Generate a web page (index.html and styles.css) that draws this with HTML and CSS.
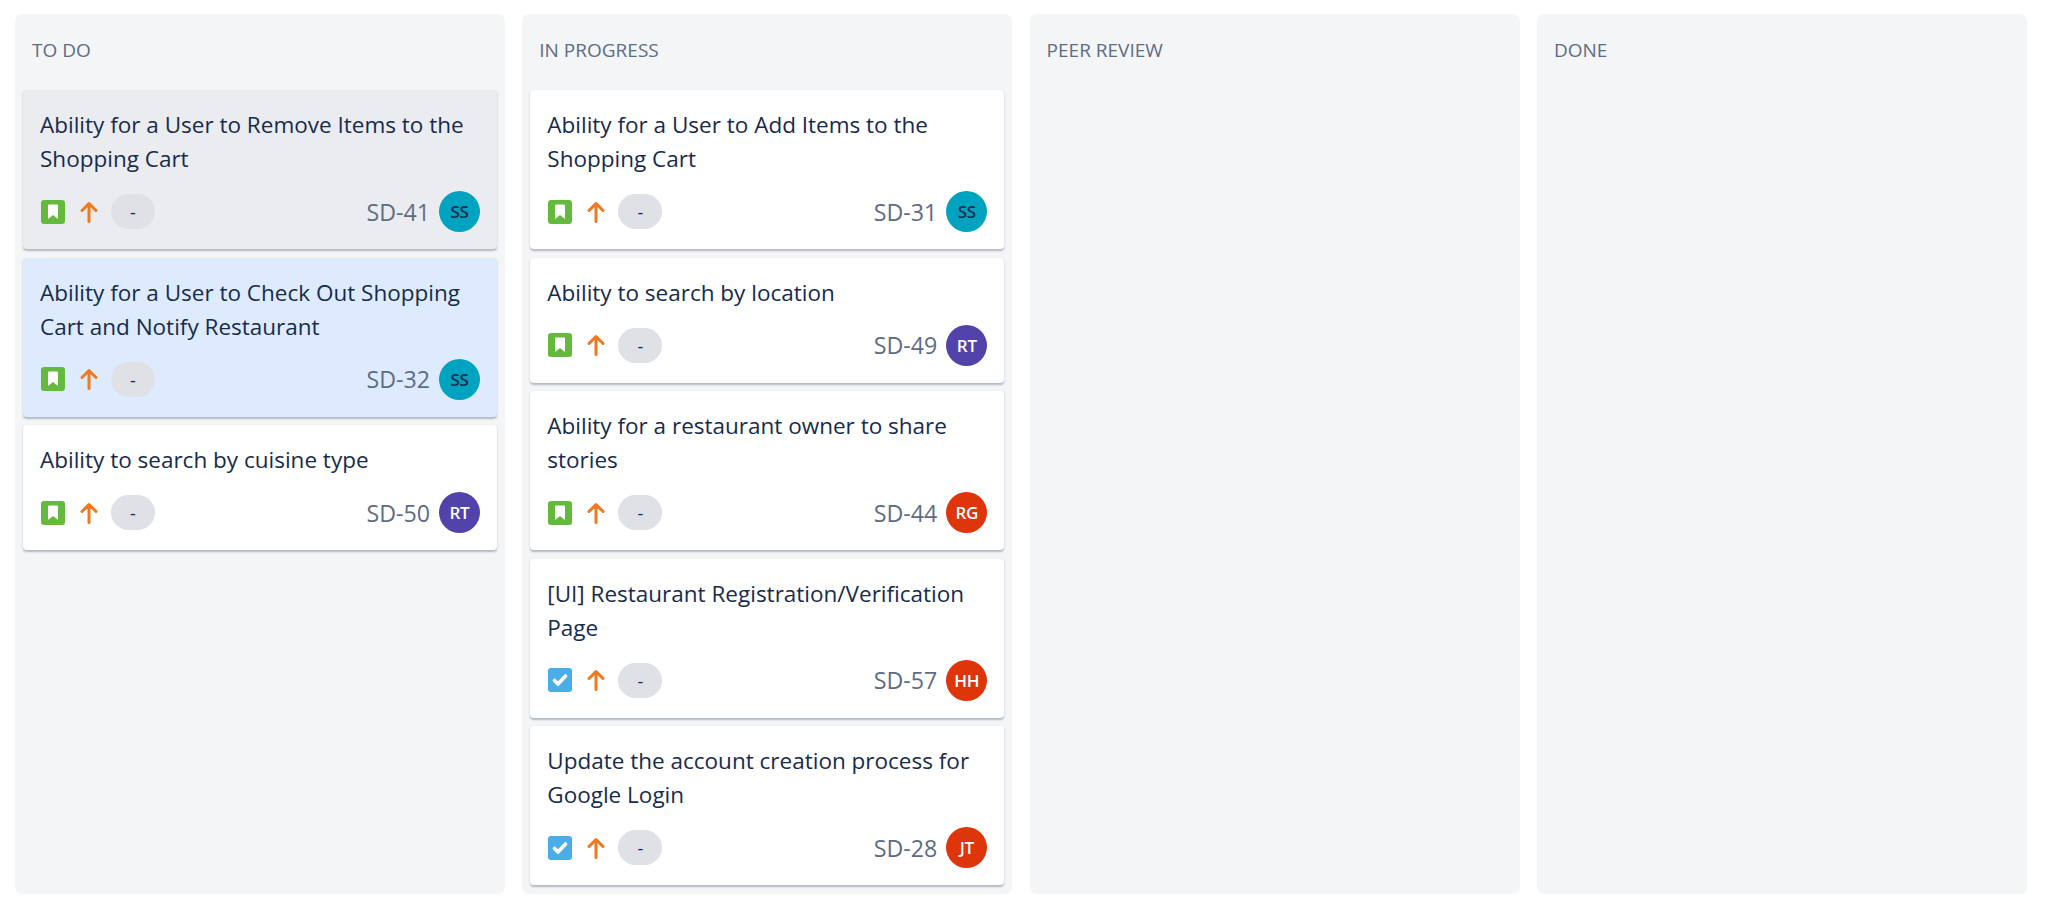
FILE: index.html
```html
<!DOCTYPE html>
<html lang="en">
<head>
<meta charset="utf-8">
<title>Board</title>
<link rel="stylesheet" href="styles.css">
</head>
<body>
<svg class="defs" width="0" height="0" aria-hidden="true">
  <symbol id="story" viewBox="0 0 24 24"><rect x="0" y="0" width="24" height="24" rx="3" fill="#63ba3c"/><path d="M7 5.500a1 1 0 0 1 1-1h8a1 1 0 0 1 1 1v13.500l-5-4-5 4z" fill="#fff"/></symbol>
  <symbol id="task" viewBox="0 0 24 24"><rect x="0" y="0" width="24" height="24" rx="3" fill="#4bade8"/><path d="M6.500 12.500l3.500 3.500 7.500-8" fill="none" stroke="#fff" stroke-width="3.600" stroke-linecap="round" stroke-linejoin="round"/></symbol>
  <symbol id="up" viewBox="0 0 24 24"><path d="M12 21.500V3.500M5 10.500L12 3.500l7 7" fill="none" stroke="#f0781e" stroke-width="3" stroke-linecap="round" stroke-linejoin="round"/></symbol>
</svg>
<main class="board">
  <section class="column">
    <h2 class="column-title">TO DO</h2>
    <article class="card card-hover">
      <p class="card-title">Ability for a User to Remove Items to the Shopping Cart</p>
      <div class="card-meta"><svg class="type"><use href="#story"/></svg><svg class="prio"><use href="#up"/></svg><span class="pill">-</span><span class="key">SD-41</span><span class="avatar teal">SS</span></div>
    </article>
    <article class="card card-selected">
      <p class="card-title">Ability for a User to Check Out Shopping Cart and Notify Restaurant</p>
      <div class="card-meta"><svg class="type"><use href="#story"/></svg><svg class="prio"><use href="#up"/></svg><span class="pill">-</span><span class="key">SD-32</span><span class="avatar teal">SS</span></div>
    </article>
    <article class="card">
      <p class="card-title">Ability to search by cuisine type</p>
      <div class="card-meta"><svg class="type"><use href="#story"/></svg><svg class="prio"><use href="#up"/></svg><span class="pill">-</span><span class="key">SD-50</span><span class="avatar purple">RT</span></div>
    </article>
  </section>
  <section class="column">
    <h2 class="column-title">IN PROGRESS</h2>
    <article class="card">
      <p class="card-title">Ability for a User to Add Items to the Shopping Cart</p>
      <div class="card-meta"><svg class="type"><use href="#story"/></svg><svg class="prio"><use href="#up"/></svg><span class="pill">-</span><span class="key">SD-31</span><span class="avatar teal">SS</span></div>
    </article>
    <article class="card">
      <p class="card-title">Ability to search by location</p>
      <div class="card-meta"><svg class="type"><use href="#story"/></svg><svg class="prio"><use href="#up"/></svg><span class="pill">-</span><span class="key">SD-49</span><span class="avatar purple">RT</span></div>
    </article>
    <article class="card">
      <p class="card-title">Ability for a restaurant owner to share stories</p>
      <div class="card-meta"><svg class="type"><use href="#story"/></svg><svg class="prio"><use href="#up"/></svg><span class="pill">-</span><span class="key">SD-44</span><span class="avatar red">RG</span></div>
    </article>
    <article class="card">
      <p class="card-title">[UI] Restaurant Registration/Verification Page</p>
      <div class="card-meta"><svg class="type"><use href="#task"/></svg><svg class="prio"><use href="#up"/></svg><span class="pill">-</span><span class="key">SD-57</span><span class="avatar red">HH</span></div>
    </article>
    <article class="card">
      <p class="card-title">Update the account creation process for Google Login</p>
      <div class="card-meta"><svg class="type"><use href="#task"/></svg><svg class="prio"><use href="#up"/></svg><span class="pill">-</span><span class="key">SD-28</span><span class="avatar red">JT</span></div>
    </article>
  </section>
  <section class="column"><h2 class="column-title">PEER REVIEW</h2></section>
  <section class="column"><h2 class="column-title">DONE</h2></section>
</main>
</body>
</html>
```
FILE: styles.css
```css
html, body { margin: 0; padding: 0; background: #fff; }
body { font-family: "Open Sans", "Noto Sans", "Liberation Sans", sans-serif; color: #172b4d; height: 913px; overflow: hidden; }
.defs { position: absolute; }
.board { display: grid; grid-template-columns: repeat(4, 490px); column-gap: 17.300px; padding: 14px 15px 19px; height: 880px; box-sizing: content-box; }
.column { background: #f4f5f7; border-radius: 7px; padding: 0 8px; height: 880px; box-sizing: border-box; display: flex; flex-direction: column; gap: 8.500px; }
.column-title { margin: 0 0 -8.500px; height: 76px; box-sizing: border-box; padding: 24px 0 0 9px; font-size: 19px; line-height: 24px; font-weight: 400; color: #5e6c84; }
.card { background: #fff; border-radius: 4px; box-shadow: 0 1.500px 2px rgba(9, 30, 66, .28); padding: 18px 17px 0 17px; box-sizing: border-box; }
.card-hover { background: #ebecf0; }
.card-selected { background: #deebff; }
.card-title { margin: 0; font-size: 22.500px; line-height: 34px; color: #172b4d; }
.card-meta { display: flex; align-items: center; height: 41px; margin-top: 15px; padding-bottom: 17px; }
.type { width: 24px; height: 24px; flex: none; margin-left: 1px; }
.prio { width: 24px; height: 24px; flex: none; margin-left: 12px; }
.pill { width: 44px; height: 35px; flex: none; margin-left: 10px; border-radius: 18px; background: #dfe1e6; font-size: 18px; line-height: 37px; text-align: center; }
.key { margin-left: auto; font-size: 23.200px; color: #5e6c84; }
.avatar { width: 41px; height: 41px; flex: none; margin-left: 9px; border-radius: 50%; font-size: 17px; font-weight: 600; line-height: 41px; text-align: center; letter-spacing: -0.300px; color: #fff; }
.teal { background: #00a3bf; color: #172b4d; }
.purple { background: #5243aa; }
.red { background: #de350b; }
```
